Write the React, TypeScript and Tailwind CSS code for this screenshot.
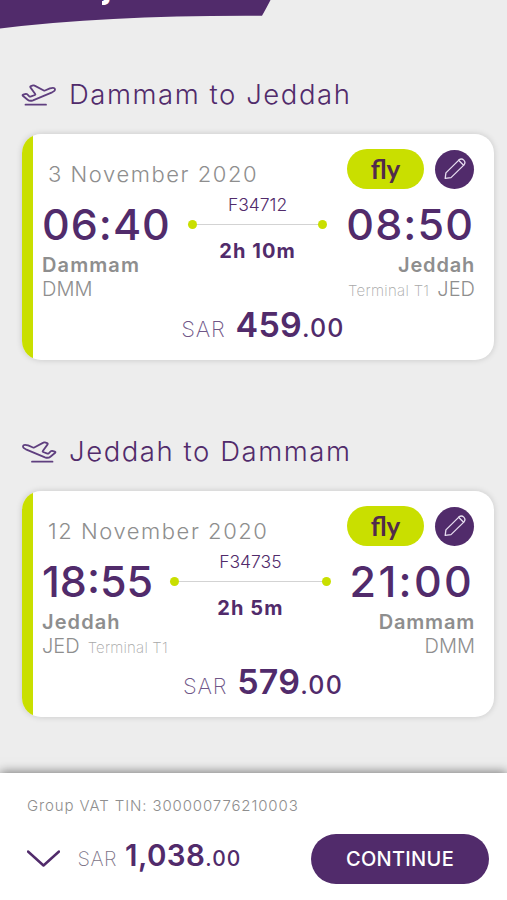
// Trip summary screen with both flight legs and the checkout bar

import React from 'react';
import clsx from 'clsx';

interface Stop {
  time: string;
  timeTracking: string;
  city: string;
  code: string;
  terminal?: string;
}

interface Leg {
  title: string;
  returning: boolean;
  date: string;
  flight: string;
  duration: string;
  routeWidth: string;
  from: Stop;
  to: Stop;
  price: string;
}

const legs: Leg[] = [
  {
    title: 'Dammam to Jeddah',
    returning: false,
    date: '3 November 2020',
    flight: 'F34712',
    duration: '2h 10m',
    routeWidth: 'w-[139px]',
    from: { time: '06:40', timeTracking: 'tracking-[1px]', city: 'Dammam', code: 'DMM' },
    to: { time: '08:50', timeTracking: 'tracking-[1.1px]', city: 'Jeddah', code: 'JED', terminal: 'Terminal T1' },
    price: '459',
  },
  {
    title: 'Jeddah to Dammam',
    returning: true,
    date: '12 November 2020',
    flight: 'F34735',
    duration: '2h 5m',
    routeWidth: 'w-[161px]',
    from: { time: '18:55', timeTracking: 'tracking-normal', city: 'Jeddah', code: 'JED', terminal: 'Terminal T1' },
    to: { time: '21:00', timeTracking: 'tracking-[2.3px]', city: 'Dammam', code: 'DMM' },
    price: '579',
  },
];

function PlaneIcon({ returning }: { returning: boolean }) {
  return (
    <svg
      width="36"
      height="24"
      viewBox="0 0 36 24"
      fill="none"
      stroke="#5f3f7f"
      strokeWidth="1.8"
      strokeLinecap="round"
      strokeLinejoin="round"
      className={clsx('shrink-0', returning && '-scale-x-100')}
    >
      <path d="M2.2 11.6l2.7-.7q.7-.1 1.2.3l2.2 2.1q.5.5 1.2.3l4.4-1.6q.8-.4.3-1.1L9.4 4.4q-.5-.9.4-1.2l2.4-.8q.7-.2 1.4.2l9.2 4.9q.6.3 1.2 0l4.9-2.1q3.6-1.3 4.8.1 1.3 1.9-2.6 3.8L12 17.3q-3.2 1.2-5.4-.6l-4.8-3.9q-.7-.8.4-1.2z" />
      <path d="M4.5 21.7h20.5" />
    </svg>
  );
}

function PencilIcon() {
  return (
    <svg
      width="22"
      height="22"
      viewBox="0 0 22 22"
      fill="none"
      stroke="#e6dcef"
      strokeWidth="1.3"
      strokeLinecap="round"
      strokeLinejoin="round"
    >
      <path d="M1.2 20.3l.7-5.4L14.8 2.1q2.6-2.3 5 0 2.3 2.5 0 5L7 19.6z" />
      <path d="M14.6 2.3l5 5" />
    </svg>
  );
}

function Price({ amount }: { amount: string }) {
  return (
    <div className="flex h-10 items-baseline justify-center leading-10 text-[#512b6b]">
      <span className="mr-2.5 text-[22px] font-extralight tracking-[0.8px] text-[#6f5687]">SAR</span>
      <span className="text-[34px] font-semibold tracking-[0.2px]">{amount}</span>
      <span className="text-[25px] font-medium tracking-[1.2px]">.00</span>
    </div>
  );
}

function FlightCard({ leg }: { leg: Leg }) {
  return (
    <div className="flex h-[226px] w-[472px] overflow-hidden rounded-[19px] bg-white shadow-[0_0_6px_rgba(0,0,0,0.16)]">
      <div className="w-[11px] shrink-0 bg-[#c9df00]" />
      <div className="flex-1 pt-[15px] pr-5 pl-[9px]">
        {/* Date and actions */}
        <div className="flex h-10 items-start justify-between">
          <span className="mt-2.5 ml-1.5 text-[22px] leading-[30px] font-light tracking-[1.55px] text-[#8e8e8e]">
            {leg.date}
          </span>
          <div className="flex items-center gap-[11px]">
            <div className="flex h-10 w-[77px] items-center justify-center rounded-full bg-[#c9df00] font-[Lato,sans-serif] text-[26px] font-bold text-[#512b4b]">
              fly
            </div>
            <button className="flex size-[39px] items-center justify-center rounded-full bg-[#512b6b]">
              <PencilIcon />
            </button>
          </div>
        </div>

        {/* Times */}
        <div className="flex h-[74px] justify-between whitespace-nowrap text-[#512b6b]">
          <span className={clsx('mt-[15px] text-[43px] leading-10 font-medium', leg.from.timeTracking)}>
            {leg.from.time}
          </span>
          <div className={clsx('-ml-0.5 flex flex-col items-center pt-[5px]', leg.routeWidth)}>
            <span className="text-[17.5px] leading-[22px] font-light">{leg.flight}</span>
            <div className="mt-1 flex w-full items-center">
              <span className="size-[9px] rounded-full bg-[#c9df00]" />
              <span className="h-px flex-1 bg-[#d3d3d3]" />
              <span className="size-[9px] rounded-full bg-[#c9df00]" />
            </div>
            <span className="mt-[10px] text-[20px] leading-6 font-bold tracking-[1.1px]">{leg.duration}</span>
          </div>
          <span className={clsx('mt-[15px] text-[43px] leading-10 font-medium', leg.to.timeTracking)}>
            {leg.to.time}
          </span>
        </div>

        {/* Airports */}
        <div className="-mt-2.5 flex justify-between text-[20px] leading-6 text-[#8e8e8e]">
          <div>
            <div className="font-semibold tracking-[1.1px]">{leg.from.city}</div>
            <div className="flex items-baseline gap-2 font-light">
              {leg.from.code}
              {leg.from.terminal && (
                <span className="text-[15px] font-extralight tracking-[0.2px] text-[#a8a8a8]">{leg.from.terminal}</span>
              )}
            </div>
          </div>
          <div className="text-right">
            <div className="-mr-px font-semibold tracking-[0.8px]">{leg.to.city}</div>
            <div className="-mr-px flex items-baseline justify-end gap-2 font-light">
              {leg.to.terminal && (
                <span className="text-[15px] font-extralight tracking-[0.3px] text-[#a8a8a8]">{leg.to.terminal}</span>
              )}
              {leg.to.code}
            </div>
          </div>
        </div>

        <div className="mt-0.5 pl-2.5">
          <Price amount={leg.price} />
        </div>
      </div>
    </div>
  );
}

export default function App() {
  return (
    <div className="flex h-[900px] w-[507px] flex-col overflow-hidden bg-[#ededed] font-[Inter,sans-serif]">
      {/* Header ribbon */}
      <header className="relative h-[76px] shrink-0">
        <svg width="280" height="32" viewBox="0 0 280 32" className="block">
          <path d="M0 0h270.5q-3 6-8.5 15.8Q110 15 0 28.5z" fill="#512b6b" />
        </svg>
        <div className="absolute top-0 left-[102px] h-[5px] w-5 overflow-hidden">
          <span className="block -translate-y-[35px] text-[36px] leading-10 font-bold text-white">j</span>
        </div>
      </header>

      {/* Flight legs */}
      <main className="flex flex-col gap-[73px] pl-[22px]">
        {legs.map((leg) => (
          <section key={leg.flight}>
            <h2 className="flex h-[58px] items-start gap-3 text-[27.5px] leading-9 font-light tracking-[1.55px] text-[#512b6b]">
              <span className="mt-[7px] -ml-px">
                <PlaneIcon returning={leg.returning} />
              </span>
              {leg.title}
            </h2>
            <FlightCard leg={leg} />
          </section>
        ))}
      </main>

      {/* Checkout bar */}
      <footer className="mt-auto h-[127px] shrink-0 bg-white pt-[23px] pl-[27px] shadow-[0_-1px_10px_rgba(0,0,0,0.5)]">
        <p className="text-[15px] leading-5 font-light tracking-[0.88px] text-[#8e8e8e]">
          Group VAT TIN: 300000776210003
        </p>
        <div className="mt-[18px] flex items-center">
          <svg width="33" height="18" viewBox="0 0 33 18" fill="none" stroke="#512b6b" strokeWidth="2.5">
            <path d="M1 1.5l15.5 14L32 1.5" strokeLinecap="round" strokeLinejoin="round" />
          </svg>
          <div className="-mt-1 ml-[17.5px] flex w-[233.5px] items-baseline leading-10 text-[#512b6b]">
            <span className="mr-2 text-[20px] font-extralight tracking-[0.5px] text-[#7c7387]">SAR</span>
            <span className="text-[29.5px] font-semibold tracking-[0.4px]">1,038</span>
            <span className="text-[21px] font-medium tracking-[1.1px]">.00</span>
          </div>
          <button className="h-[50px] w-[178px] rounded-full bg-[#512b6b] text-[20px] font-medium tracking-[0.3px] text-white">
            CONTINUE
          </button>
        </div>
      </footer>
    </div>
  );
}
